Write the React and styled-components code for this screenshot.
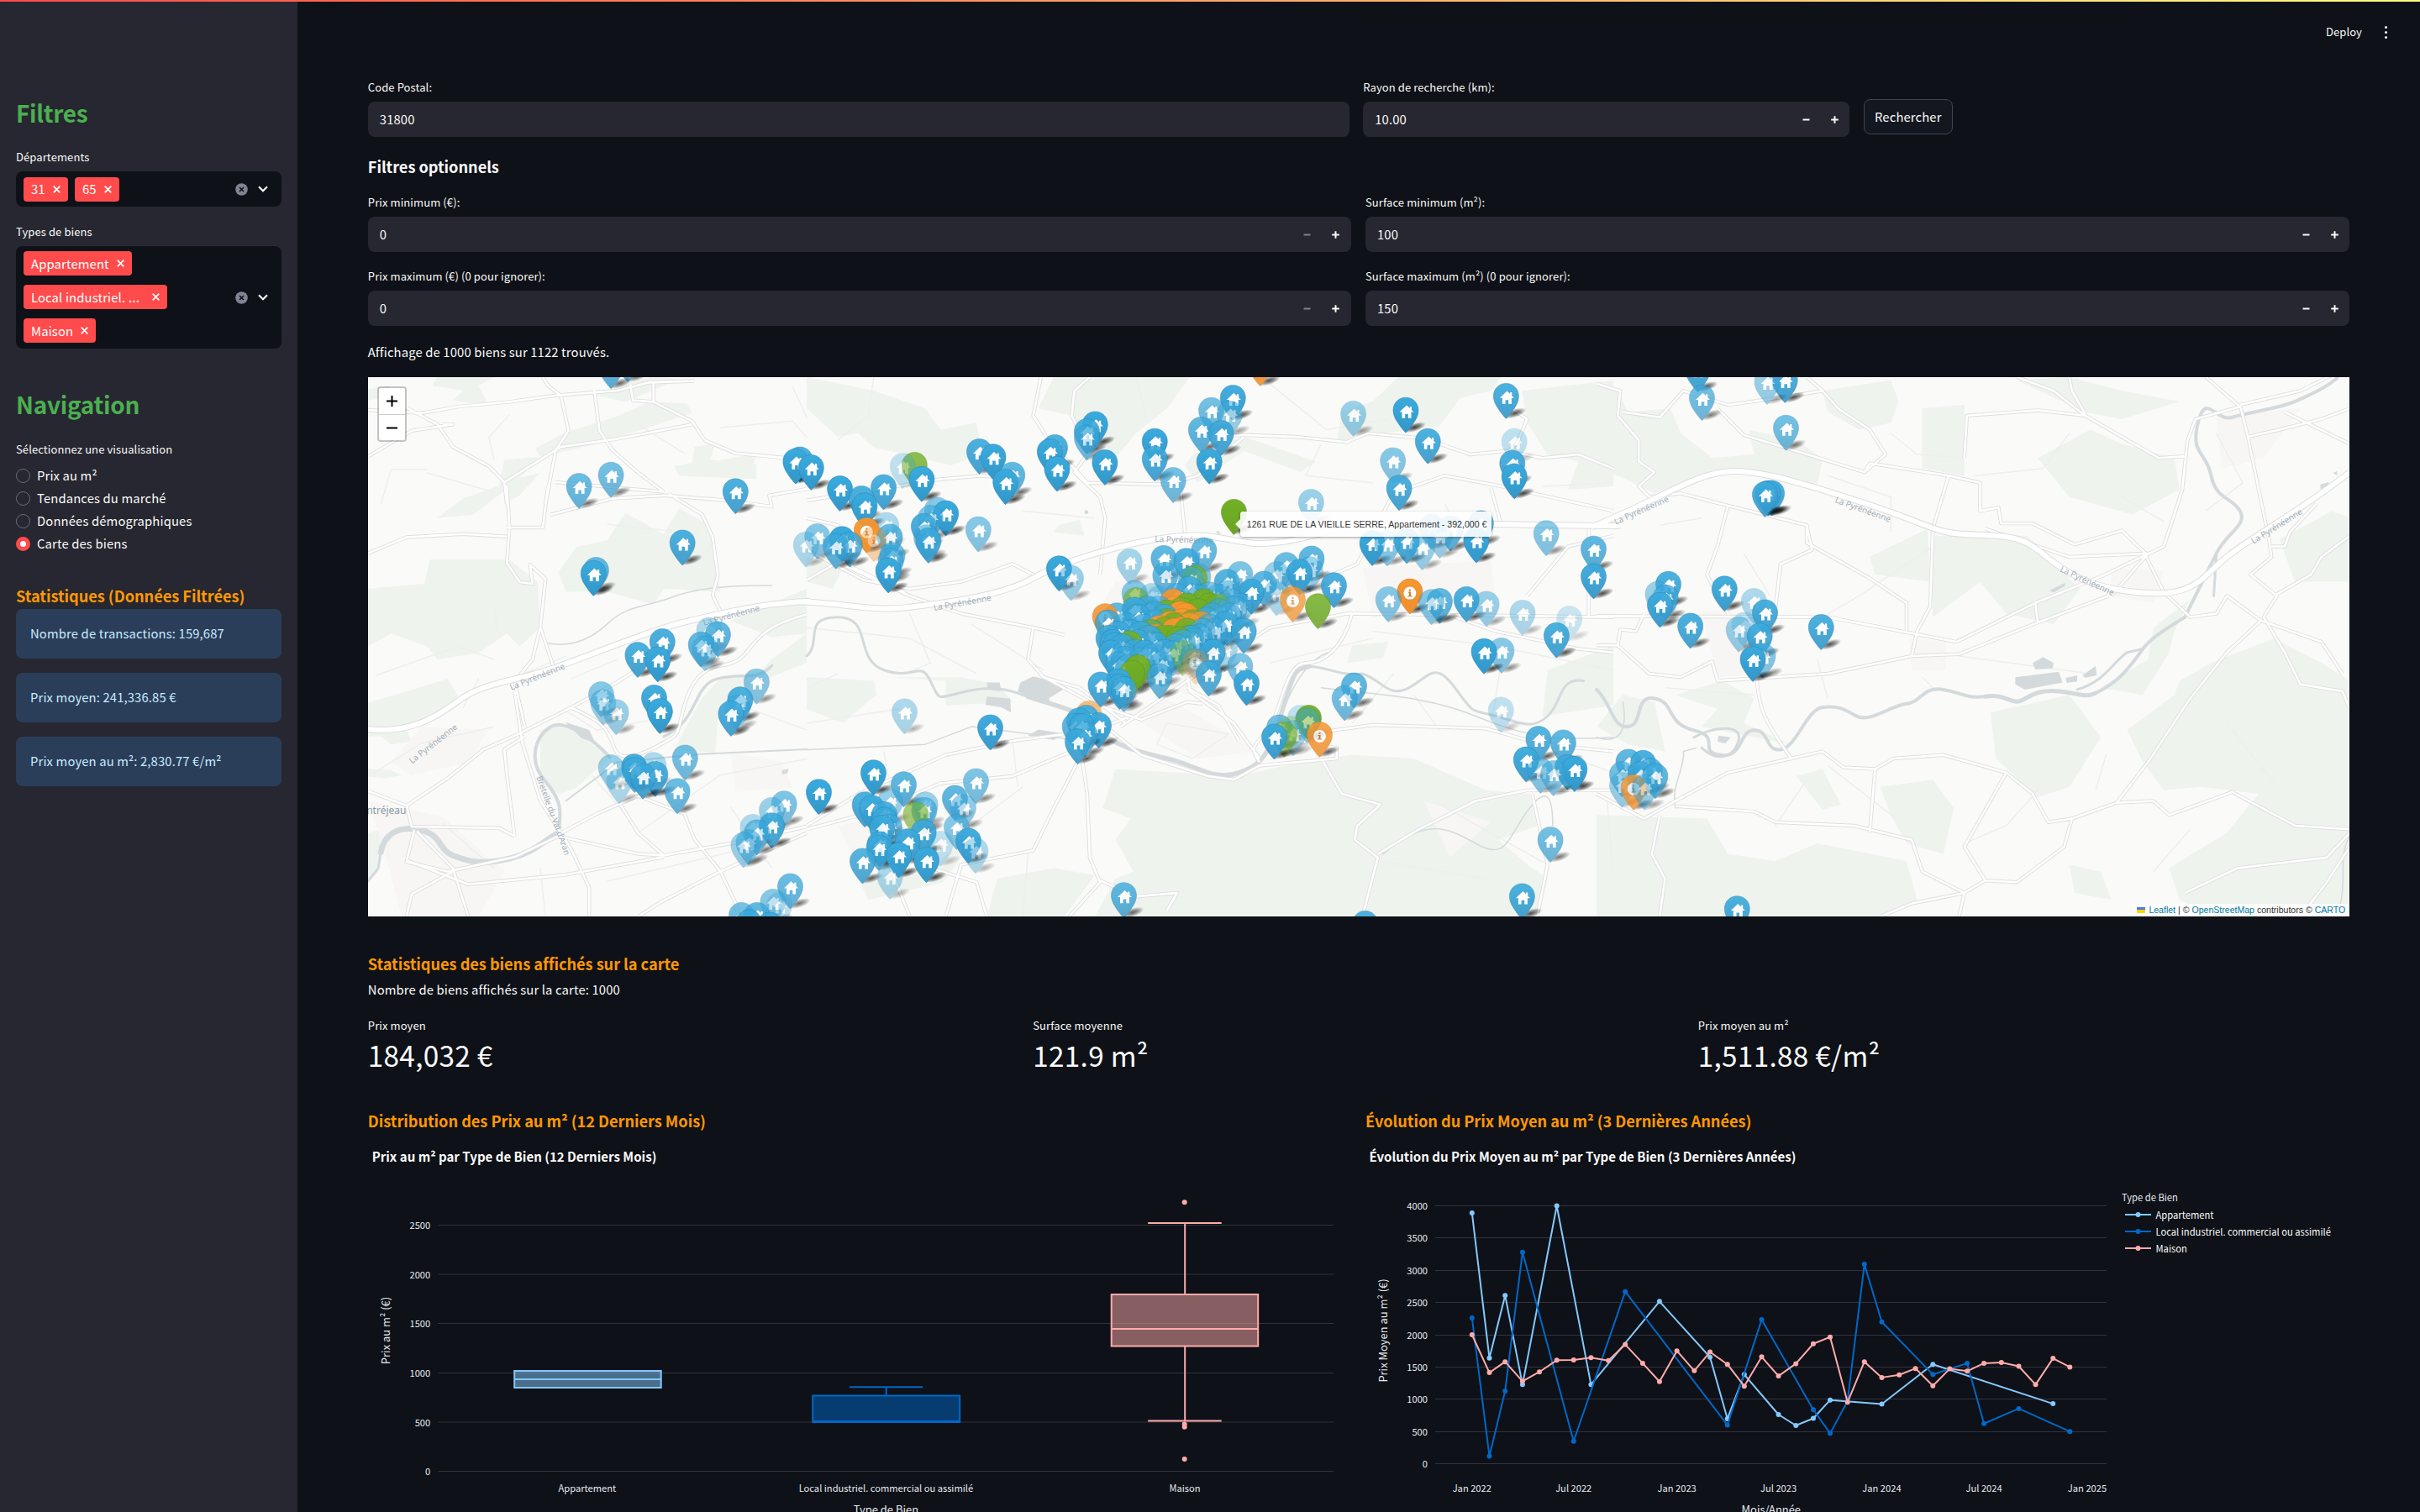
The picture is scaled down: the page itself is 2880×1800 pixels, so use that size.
import React from 'react';
import styled, { createGlobalStyle, css } from 'styled-components';

const FONT = '"Noto Sans CJK SC", "Noto Sans", sans-serif';

const GlobalStyle = createGlobalStyle`
  *, *::before, *::after { box-sizing: border-box; }
  html, body { margin: 0; padding: 0; background: #0e1117; }
  body { width: 2880px; height: 1800px; overflow: hidden; font-family: ${FONT}; color: #fafafa; }
`;

const bodyText = css`
  font-size: 14.8px;
  letter-spacing: 0.14px;
`;

const smallText = css`
  font-size: 13px;
  letter-spacing: 0.1px;
`;

/* ---------- shell ---------- */

const Shell = styled.div`
  position: relative;
  display: flex;
  width: 2880px;
  height: 1800px;
  overflow: hidden;
`;

const TopStripe = styled.div`
  position: absolute;
  top: 0;
  left: 0;
  right: 0;
  height: 2px;
  background: linear-gradient(90deg, #ff4b4b, #fffd80);
`;

const Toolbar = styled.header`
  position: absolute;
  top: 26px;
  right: 34px;
  display: flex;
  align-items: center;
  gap: 22px;
  height: 24px;
`;

const Deploy = styled.span`
  ${smallText}
  line-height: 24px;
`;

const Dots = styled.span`
  display: grid;
  gap: 3px;
  padding: 0 5px;
  i { display: block; width: 3px; height: 3px; border-radius: 50%; background: #fafafa; }
`;

const Sidebar = styled.aside`
  flex: none;
  width: 354px;
  height: 100%;
  padding: 114.5px 19px 0;
  background: #262730;
`;

const Main = styled.main`
  flex: none;
  width: 2526px;
  padding: 94px 83.8px 0 83.8px;
`;

/* ---------- widgets ---------- */

const Heading = styled.h1`
  margin: ${(p) => p.$top || 0}px 0 0;
  font-size: 28px;
  line-height: 38px;
  font-weight: 700;
  letter-spacing: -0.3px;
  color: #4caf50;
`;

const Subheading = styled.h3`
  margin: ${(p) => p.$top || 0}px 0 0;
  font-size: 18.2px;
  line-height: 24px;
  font-weight: 700;
  letter-spacing: -0.04px;
  white-space: nowrap;
  color: ${(p) => p.$color || '#ff9800'};
`;

const Label = styled.div`
  height: 27px;
  margin-top: ${(p) => p.$top || 0}px;
  ${smallText}
  line-height: 20px;
  white-space: nowrap;
`;

const Paragraph = styled.p`
  margin: ${(p) => p.$top || 0}px 0 0;
  ${bodyText}
  line-height: 24px;
`;

const SelectBox = styled.div`
  display: flex;
  align-items: center;
  width: 316px;
  height: ${(p) => p.$height}px;
  padding: 0 14px 0 9px;
  border-radius: 8px;
  background: #0e1117;
`;

const Tags = styled.div`
  flex: 1;
  display: flex;
  flex-direction: ${(p) => (p.$stack ? 'column' : 'row')};
  align-items: flex-start;
  gap: ${(p) => (p.$stack ? 11 : 8)}px;
  padding-bottom: ${(p) => (p.$stack ? 1 : 0)}px;
`;

const Tag = styled.span`
  display: flex;
  align-items: center;
  justify-content: space-between;
  width: ${(p) => p.$width}px;
  height: 29px;
  padding: 0 9px;
  border-radius: 4px;
  background: #ff4b4b;
  ${bodyText}
  line-height: 28px;
  white-space: nowrap;
  color: #fff;
`;

const Ellipsis = styled.span`
  font-family: "Noto Sans", sans-serif;
  font-size: 17px;
  line-height: 1;
`;

const SelectIcons = styled.div`
  display: flex;
  align-items: center;
  gap: 10px;
`;

const RadioList = styled.div`
  display: flex;
  flex-direction: column;
  margin-top: 1.5px;
`;

const RadioRow = styled.div`
  display: flex;
  align-items: center;
  gap: 8px;
  height: 26.9px;
  ${bodyText}
  line-height: 26px;
`;

const RadioDot = styled.span`
  width: 17px;
  height: 17px;
  border-radius: 50%;
  border: 1px solid #6b6c75;
  ${(p) => p.$on && css`border: 5.5px solid #ff4b4b; background: #fff;`}
`;

const InfoList = styled.div`
  display: flex;
  flex-direction: column;
  gap: 17.2px;
  margin-top: 4px;
`;

const InfoBox = styled.div`
  height: 59px;
  padding: 17px 17px;
  border-radius: 8px;
  background: #2b3e59;
  color: #c7ebff;
  ${bodyText}
  line-height: 24px;
`;

const FieldRow = styled.div`
  display: grid;
  grid-template-columns: ${(p) => p.$columns};
  justify-content: space-between;
  margin-top: ${(p) => p.$top || 0}px;
`;

const InputBox = styled.div`
  display: flex;
  align-items: center;
  height: 42px;
  padding: 0 1px 0 14px;
  border-radius: 8px;
  background: #262730;
  ${bodyText}
  line-height: 40px;
`;

const InputValue = styled.span`
  flex: 1;
`;

const Step = styled.span`
  display: grid;
  place-items: center;
  width: 34px;
  height: 42px;
  color: ${(p) => (p.$muted ? '#80828e' : '#fafafa')};
`;

const SearchButton = styled.button`
  justify-self: start;
  width: 106px;
  height: 42px;
  margin: 24px 0 0 0.6px;
  padding: 0;
  border: 1px solid #41444c;
  border-radius: 8px;
  background: #131720;
  color: #fafafa;
  font-family: ${FONT};
  ${bodyText}
  line-height: 36px;
`;

/* ---------- map chrome ---------- */

const MapFrame = styled.div`
  position: relative;
  width: 2358.4px;
  height: 642px;
  margin-top: 18px;
  overflow: hidden;
  background: #fafaf8;
  font-family: "Liberation Sans", Arial, sans-serif;
  & > svg { display: block; }
`;

const ZoomControl = styled.div`
  position: absolute;
  top: 11px;
  left: 11px;
  width: 35px;
  border: 2px solid rgba(0, 0, 0, 0.22);
  border-radius: 4px;
  background: #fff;
  background-clip: padding-box;
  overflow: hidden;
`;

const ZoomButton = styled.div`
  display: grid;
  place-items: center;
  height: 31px;
  color: #000;
  & + & { border-top: 1px solid #ccc; }
`;

const Tooltip = styled.div`
  position: absolute;
  left: 1038px;
  top: 160px;
  width: 299px;
  height: 30px;
  padding: 0 7px 0 8px;
  border-radius: 3px;
  background: #fff;
  box-shadow: 0 1px 3px rgba(0, 0, 0, 0.4);
  color: #222;
  font-size: 10.6px;
  line-height: 30px;
  white-space: nowrap;
  opacity: 0.9;
  &::before {
    content: "";
    position: absolute;
    left: -6px;
    top: 9px;
    border: 6px solid transparent;
    border-left: 0;
    border-right-color: #fff;
  }
`;

const Attribution = styled.div`
  position: absolute;
  right: 0;
  bottom: 0;
  display: flex;
  align-items: center;
  gap: 3px;
  height: 15px;
  padding: 0 5px;
  background: rgba(255, 255, 255, 0.8);
  color: #333;
  font-size: 10.55px;
  line-height: 15px;
  white-space: nowrap;
  b { font-weight: 400; color: #0078a8; }
`;

const Flag = styled.i`
  width: 10px;
  height: 7px;
  margin-right: 1px;
  background: linear-gradient(#4c7be1 50%, #ffd500 50%);
`;

/* ---------- metrics and charts ---------- */

const MetricRow = styled.div`
  display: grid;
  grid-template-columns: repeat(3, 1fr);
  column-gap: 16px;
  margin-top: 21px;
`;

const MetricLabel = styled.div`
  ${smallText}
  height: 17.5px;
  line-height: 20px;
`;

const MetricValue = styled.div`
  font-size: 33.3px;
  letter-spacing: 0.3px;
  line-height: 54px;
`;

const ChartRow = styled.div`
  display: grid;
  grid-template-columns: 1fr 1fr;
  column-gap: 16px;
  margin-top: 39.5px;
`;

const ChartSvg = styled.svg`
  display: block;
  width: 100%;
  height: 450px;
  margin-top: 14px;
  font-family: ${FONT};
`;

/* ---------- map data ---------- */

/* Tile frames: origin x, origin y, scale x, scale y */
const TILES = {
  N: [0, 0, 0.6122, 0.3827],
  W: [0, 540, 0.6122, 0.3827],
  C: [960, 440, 0.6122, 0.4209],
  E: [1900, 440, 0.625, 0.4209],
  T: [1280, 580, 1 / 3, 1 / 3],
  S: [860, 820, 1 / 3, 1 / 3],
  P: [0, 0, 1, 1],
};

/* x, y, opacity, with g or o in front for the green and orange pins */
const PINS = {
  P: '728,438,.8 748,430,.8 773,424,.3',
  C: `830,85,.95 788,120,.7 824,130,.5 768,175,.8 807,185,.9 784,265,1 678,208,1 678,257,.9 714,318,.7 581,268,1
    562,160,1 546,180,.9 546,198,.7 484,225,.9 474,237,1 488,286,1 401,303,.8 388,323,1 337,237,.9 364,252,1
    225,315,1 g211,275,.8 188,278,.3 151,338,.9 66,342,1 10,282,1 -12,260,.9 108,370,.9 114,390,1 o118,460,.95 o132,485,.4
    156,445,.4 163,478,.8 255,402,.6 272,412,1 242,425,.6 229,448,.9 234,480,.6 238,489,.9 335,457,.6 168,530,.7
    165,545,.7 160,573,1 70,485,1 85,500,.8 58,505,.8 22,477,.6 0,500,.4 o883,-12,.9 1064,130,.5 1166,120,1
    1361,80,.9 1209,208,.9 1141,262,.6 1377,208,.3 1373,270,.9 1377,307,1 1153,340,.9 982,380,.5 1439,468,.6
    1531,512,.8 1531,590,.95 1101,496,1 1130,497,.6 1168,490,.9 1198,508,.5 1232,475,.5 1253,455,.8 1303,488,1
    1312,440,.8 1216,450,.7 492,568,1 515,595,.5 1132,655,.6 o1174,633,1 1216,663,.6 1232,660,.8 1284,655,.9
    1323,668,.5 1393,693,.4 1484,710,.25 1459,757,.9 1318,802,1 1352,800,.6 1351,968,.3 618,1492,.8 1392,1495,.9
    1087,1572,.9 1447,1335,.7 1424,1050,.85 1472,1060,.8 1400,1108,.95 1428,1140,.6 1453,1147,.6 1480,1130,.9 1494,1135,1`,
  E: `202,85,.7 194,5,.9 326,40,.5 360,35,.9 362,170,.7 335,355,.9 328,355,.9 322,358,.9 245,625,.95 138,612,.9
    118,640,.5 133,650,.8 122,671,.95 180,730,.9 301,660,.4 322,692,.9 283,728,.3 272,740,.5 312,758,.9 318,815,.6
    299,824,1 429,734,.9 62,1115,.8 90,1118,.9 50,1150,.7 103,1140,.8 113,1155,.8 85,1150,.8 50,1180,.5 o72,1187,.8 93,1187,.5
    269,1530,.9`,
  W: `1189,72,.7 1127,107,.75 1431,123,.9 1548,30,1 1328,283,.9 1160,368,.8 1155,378,1 1289,590,.9 1241,632,.9
    1280,646,1 1380,555,.4 1397,568,.8 1364,600,.8 1372,612,.5 1472,715,.6 1170,755,.6
    1174,780,.5 1199,810,.5 1273,765,.95 1284,807,1 1189,982,.5 1205,1025,.4 1234,980,.95 1235,990,.8 1272,975,.4
    1275,1003,.9 1251,1010,.9 1333,952,.7 1318,1056,.75`,
  S: `65,45,.9 32,95,.9 55,75,.5 652,88,.4 958,145,.97 541,306,1 649,348,.8 346,375,1 222,417,.65 178,440,.5
    110,500,.4 125,520,.7 178,495,.9 95,555,.6 77,565,.5 907,337,.65 832,397,.8 862,430,.55 726,420,.5 722,440,.7
    g692,455,.6 510,420,.9 535,432,.95 600,410,.5 580,455,.9 580,475,.9 572,503,.9 598,500,.7 720,519,.9 663,552,.95
    563,562,.9 560,575,.8 502,622,.85 631,601,1 730,618,.98 838,500,.6 780,560,.3 880,550,.95 905,585,.4 600,677,.4
    244,712,.75 182,767,.6 205,780,.3 70,815,.7 95,840,.95 125,815,.8 170,850,.9`,
  T: `g568,95,1 195,272,.45 317,260,.8 398,270,.9 461,232,.75 323,320,.75 g427,330,.8 415,335,.6 440,325,.6 408,370,.9
    590,317,.65 543,345,.85 675,352,.8 630,380,.95 720,385,.4 720,318,.5 755,285,.75 845,262,.8 840,300,.5 802,310,.95
    925,357,.9 o778,407,.75 g868,432,.85 213,385,.6 g218,410,.6 275,395,.4 300,405,.4 o350,415,.9 213,445,.9
    o108,468,.9 118,490,.8 150,465,.8 180,500,.7 245,505,.8 o355,440,.95 g330,455,.9 g400,430,.95 g460,415,.95
    g480,430,.95 g512,432,.6 o375,460,1 320,470,.9 g330,485,.8 o385,485,1 g420,490,.8 o370,500,1 o300,510,.9
    o355,520,.9 g400,520,.9 o450,495,.75 470,480,.6 510,400,.5 545,385,.6 560,415,.6 570,440,.6 515,450,.6
    445,400,.7 480,390,.6 365,395,.7 590,430,.5 260,440,.8 285,460,.7 500,520,.6 225,470,.8 200,525,.8 155,530,.8
    538,495,.95 603,520,.85 120,545,.9 135,560,.8 130,598,.95 145,570,.9 175,605,.6 178,620,.7 g195,565,.9
    225,560,.8 250,598,.9 290,570,.8 320,595,.8 350,600,.6 360,575,.7 g385,600,.4 g340,545,.95 g315,545,.9
    170,575,.8 215,595,.8 265,545,.9 235,530,.8 275,525,.8 385,560,.7 445,540,.8 480,505,.7 455,520,.6 490,465,.7
    550,465,.7 530,430,.6 o395,465,.9 o410,500,.8 g355,500,.9 g440,450,.9 g380,445,.8 o340,495,.9 g320,515,.8
    o380,515,.9 g270,525,.7 g405,545,.7 280,610,.6 235,625,.7 190,650,.8 155,640,.8 285,490,.8 300,440,.7
    o290,540,.7 g370,550,.9 415,545,.8 425,555,.6 425,610,.4 o430,630,.3 492,595,.9 535,585,.4 590,645,.65
    613,706,.97 478,673,.85 310,640,.6 302,682,.75 g225,650,.95 g205,670,.8 92,712,.9 155,700,.95 160,720,.9
    175,728,.7 o50,815,.6 15,840,.9 40,830,.9 85,857,.95 35,890,.8 10,915,.9 0,860,.8 25,860,.8 997,715,.8 963,760,.7 805,830,.3
    730,865,.7 g770,870,.3 g835,830,.95 830,840,.5 712,898,.95 780,885,.4 g748,890,.6 o874,890,.85`,
};

const pins = Object.entries(PINS)
  .flatMap(([tile, list]) => {
    const [ox, oy, sx, sy] = TILES[tile];
    return list.trim().split(/\s+/).map((item) => {
      const kind = /^[go]/.test(item) ? item[0] : 'b';
      const [x, y, a] = item.replace(/^[go]/, '').split(',').map(Number);
      return { kind, a, x: ox + x * sx - 1, y: oy + y * sy - 0.3 };
    });
  })
  .sort((p, q) => p.y - q.y);

const WOODS = {
  N: [
    'M850,1173L960,1173 930,1200 950,1262 880,1245 900,1215 840,1200Z',
    'M1100,1345L1200,1295 1262,1250 1335,1255 1345,1285 1240,1340 1150,1385 1050,1420 1040,1395Z',
    'M1160,1230L1210,1190 1270,1173 1320,1180 1215,1250Z',
    'M715,1210L760,1200 740,1240 715,1245Z',
    'M1350,1390L1390,1380 1380,1430 1470,1445 1470,1490 1320,1480 1310,1450 1345,1440Z',
    'M980,1500L1050,1470 1010,1540 980,1568Z',
  ],
  W: [
    'M715,420L825,405 835,330 990,330 1045,400 1050,540 1010,600 985,560 930,620 850,640 830,600 760,560 715,600Z',
    'M1120,290L1180,270 1215,185 1290,250 1320,170 1380,225 1400,430 1290,420 1270,470 1180,430 1100,430 1085,370Z',
    'M850,200L900,140 970,100 980,20 1050,10 1000,90 920,190Z',
    'M1050,860L1095,840 1130,880 1185,945 1120,1040 1085,1060 1050,1000Z',
    'M715,775L780,745 870,700 890,755 830,840 790,860 800,895 760,905 740,880 715,880Z',
    'M1365,760L1400,700 1470,690 1500,640 1568,560 1568,650 1430,740 1395,830 1390,930 1310,920Z',
    'M715,980L760,985 780,1000 750,1010 715,1005Z',
    'M1420,520L1568,420 1568,560 1500,570Z',
    'M1400,20L1470,0 1460,60Z',
    'M715,1180L740,1170 735,1300 715,1330Z',
  ],
  C: [
    'M0,21L130,60 230,110 260,170 330,150 340,240 280,270 130,220 100,180 60,190 0,110Z',
    'M480,21L745,21 700,110 640,180 600,250 545,185 515,130 450,110Z',
    'M1150,21L1350,21 1330,60 1270,80 1230,160 1100,185 1030,205 1040,120 1100,90Z',
    'M1390,60L1568,30 1568,330 1480,340 1500,260 1440,240 1400,150Z',
    'M750,240L850,190 990,260 960,290 850,230 760,320 735,270Z',
    'M0,870L130,880 135,920 70,1000 0,960Z',
    'M160,870L270,880 270,950 400,940 370,890 300,870Z',
    'M840,1150L960,1110 1060,1090 1180,1100 1320,1190 1405,1200 1420,1290 1345,1330 1400,1400 1440,1440 1420,1547 560,1547 600,1440 635,1420 600,1330 630,1270 575,1240 600,1130Z',
    'M1440,850L1568,780 1568,950 1430,980Z',
    'M350,1547L370,1440 480,1410 560,1430 500,1547Z',
    'M0,530L70,560 50,620 0,600Z',
    'M490,440L530,425 540,470 480,460Z',
    'M1060,780L1130,770 1120,815 1050,830Z',
    'M265,1450L300,1380 290,1350 250,1400 100,1440 120,1500Z',
  ],
  E: [
    'M0,70L40,60 60,120 140,110 160,180 220,250 300,240 290,170 380,200 430,250 420,330 330,300 240,280 110,350 40,300 0,290Z',
    'M430,60L560,30 575,90 560,150 500,170 440,120Z',
    'M620,110L700,100 700,300 620,280Z',
    'M640,470L820,470 880,560 920,620 870,720 780,690 730,600 640,700Z',
    'M520,530L630,450 635,600 530,580Z',
    'M840,250L940,170 1000,210 1100,250 1110,340 1020,410 900,360Z',
    'M800,30L900,21 1000,60 1110,90 1000,140 930,120Z',
    'M1110,880L1170,830 1290,760 1380,830 1434,880 1434,1547 1180,1547 1110,1500 1090,1410 1200,1310 1260,1200 1150,1180 1080,1190 1040,1110 1010,1020 1100,920Z',
    'M750,970L900,920 960,1040 900,1180 840,1210 760,1100Z',
    'M150,920L230,960 200,1010 370,1060 280,1000 300,930 240,880Z',
    'M540,1180L640,1160 680,1240 660,1370 590,1340 560,1260Z',
    'M0,1260L210,1270 250,1370 340,1390 420,1340 590,1390 610,1500 540,1547 0,1547Z',
    'M900,1400L960,1420 980,1500 910,1480Z',
    'M1300,480L1400,400 1434,420 1434,600 1330,600Z',
    'M1130,650L1060,730 1050,820 960,900 1040,920 1090,800 1100,740Z',
    'M380,1150L430,1130 465,1230 430,1245Z',
    'M50,920L110,940 130,1080 60,1060 0,1010Z',
  ],
};

const URBAN = {
  W: ['M820,850L950,860 910,960 800,1000 760,960Z', 'M715,1080L860,1130 980,1300 930,1440 780,1440 750,1250Z', 'M1420,930L1520,960 1540,1040 1430,1050Z'],
  C: [
    'M600,600L840,560 860,760 740,920 600,860 560,700Z', 'M1080,560L1330,540 1340,670 1100,700Z',
    'M620,970L760,1100 880,1080 700,930Z', 'M60,1290L220,1240 260,1400 100,1400Z', 'M1200,1220L1330,1280 1250,1380Z',
  ],
  E: ['M595,760L665,770 665,850 600,850Z', 'M980,560L1080,570 1060,660 980,640Z', 'M1180,130L1340,110 1270,250 1190,280Z', 'M200,680L320,690 320,860 230,870Z'],
};

const RIVERS = {
  W: [
    [7, 'M740,1240C745,1190 770,1155 815,1170S850,1230 880,1250S940,1280 990,1260S1060,1200 1085,1180'],
    [4, 'M1085,1180C1090,1120 1095,1085 1060,1020S1040,880 1070,850S1160,900 1185,945'],
    [3.5, 'M1290,880C1360,830 1345,720 1395,700S1470,710 1500,660 1568,630'],
    [3, 'M715,1330L735,1290 740,1240'],
    [2, 'M1100,1080L1200,960 1360,935 1568,920'],
    [1.5, 'M1065,590C1100,600 1140,590 1180,530S1250,480 1300,450S1400,410 1500,410 1568,440'],
  ],
  C: [
    [3, 'M0,810C30,770 -10,700 60,700S90,820 150,850S220,820 240,880S250,930 310,910S400,910 430,925'],
    [5.5, 'M430,925C480,950 530,960 560,1010S640,1080 700,1100S790,1165 840,1140S900,1080 925,960S950,850 975,840'],
    [3, 'M975,840C1000,835 1040,870 1080,860C1120,880 1130,930 1170,900S1220,820 1260,900S1290,960 1340,980S1410,1020 1440,980S1460,870 1510,880 1568,930'],
    [1.5, 'M0,1075L230,1060 320,1010 430,1030 560,1055'],
    [1.5, 'M930,950C960,840 1000,800 1020,800M1000,900C1100,920 1200,920 1300,980S1450,1050 1568,1040'],
    [1.5, 'M1120,1370C1200,1270 1240,1290 1300,1340S1360,1330 1400,1250S1450,1210 1450,1290'],
  ],
  E: [
    [4, 'M0,905C30,950 30,1015 60,1010S70,920 110,930S130,1000 185,1020S190,1080 235,1090S270,1020 300,1020S320,1080 350,1075S400,960 430,955S470,960 495,980S560,950 590,945S620,895 660,905S700,930 740,925'],
    [5, 'M740,925C780,915 790,950 810,935S840,905 880,910S930,930 950,915'],
    [4, 'M950,915C1000,880 1020,830 1040,790S1100,720 1120,700'],
    [4, 'M1120,700C1140,640 1160,580 1180,520S1240,440 1225,400S1180,370 1170,300S1130,240 1145,150S1180,150 1210,135S1300,110 1330,90S1390,50 1410,24'],
    [3, 'M915,905C970,880 980,830 1010,800L1040,790M185,1040C220,1010 280,1000 270,1050S230,1110 200,1070'],
    [1.5, 'M0,1040C40,1060 60,1030 50,940M150,1240C140,1180 170,1120 165,1080L190,1070'],
    [3, 'M1175,640L1180,520'],
    [1.5, 'M1434,1320C1410,1380 1430,1430 1415,1520'],
  ],
};

const LAKES = {
  W: ['M1098,835L1145,860 1157,900 1130,885Z', 'M1520,985L1533,980 1530,995 1520,998Z'],
  C: [
    'M415,885L440,868 475,880 498,905 470,930 480,955 410,910Z', 'M350,885L375,885 378,910 352,905Z',
    'M350,925L395,930 397,970 378,955 347,948Z', 'M430,1035L450,1018 500,1030 480,1048Z', 'M350,985L370,980 380,1010 350,1010Z',
    'M795,463L800,455 805,465Z', 'M540,398L547,398 547,408 540,408Z',
  ],
  E: [
    'M830,830L850,813 870,830 868,845 835,848Z', 'M797,870L880,855 887,885 815,905 797,890Z',
    'M893,872L915,865 915,882 895,886Z', 'M925,865L950,838 952,865 930,872Z', 'M232,1035L255,1040 245,1058 230,1052Z',
    'M862,625L892,603 892,612 870,630Z', 'M1378,325L1395,317 1390,330 1378,338ZM1402,292L1410,287 1410,300Z',
  ],
};

const MOTORWAYS = {
  W: ['M715,857C790,870 840,830 890,770S1000,710 1080,665S1270,545 1340,520S1490,462 1575,460'],
  C: ['M-5,657C80,662 130,685 200,672S380,640 440,590S620,490 700,475S800,478 860,490S1000,460 1060,443S1250,438 1575,442L1580,440'],
  E: ['M-10,445C70,400 150,330 200,305S280,285 330,300S520,380 590,420S660,465 740,468S830,500 870,545S960,625 1050,632S1150,590 1200,530S1340,400 1434,290'],
};

const ROADS = {
  N: [
    'M715,1275L820,1285 890,1265 990,1250 1080,1230 1200,1215 1260,1190 1350,1185',
    'M790,1268L850,1320 880,1390 950,1450 980,1500 985,1568',
    'M1090,1230L1105,1340 1080,1400 1060,1568',
    'M1155,1215L1165,1340 1190,1400 1240,1470 1290,1530',
    'M980,1500L1090,1390 1200,1365 1345,1320',
    'M1225,1195L1230,1245 1270,1250 1270,1190M1270,1250L1345,1310 1370,1370 1430,1410 1530,1425',
    'M860,1320L880,1320 800,1340 715,1420M1055,1173L1065,1200 1090,1230M1080,1500L1290,1530',
  ],
  W: [
    'M985,100L990,230 985,340 1010,400 1035,405 1030,345 1060,390 1050,540 1075,660',
    'M715,310L790,260 900,250 985,258', 'M1070,190L1190,140 1290,130 1410,145 1500,165 1495,130 1568,110',
    'M1300,125L1365,190 1385,260 1395,380 1385,440 1400,490', 'M985,230L1055,230 1065,100',
    'M1050,540L1035,640 1000,710 1020,850', 'M1000,740L1015,900 1050,1080 1110,1230 1145,1350 1145,1440',
    'M790,1095L870,1010 940,920 1010,870 1110,790 1190,720 1240,670',
    'M1020,880L980,920 985,1000 1000,1190', 'M1110,790C1180,840 1180,860 1195,920S1290,900 1310,880S1320,680 1400,660S1430,560 1568,500',
    'M1085,1185L1160,1120 1240,1065 1330,1120 1350,1200 1400,1300 1430,1400 1435,1440',
    'M1205,1090L1240,1180 1290,1250M1085,1190L1240,1245 1290,1250 1430,1210 1568,1160',
    'M810,1175L880,1290 910,1440M805,1170L790,1270 870,1300 1000,1255 1085,1190',
    'M715,1050L790,1095 800,1160 970,1165 1000,1190', 'M1240,1440L1290,1390 1400,1300 1568,1180',
    'M790,1265L910,1340 1100,1310 1290,1255M880,1300L800,1370 790,1440',
  ],
  C: [
    'M455,21L440,130 470,200 545,320 700,325 760,300 850,190',
    'M550,21L520,60 515,130 550,230 520,290 570,360 580,420 570,580',
    'M0,370L130,340 260,310 340,300 400,310', 'M850,185L950,190 1050,205 1090,180 1200,195 1290,240 1360,230 1430,250 1500,240 1568,280',
    'M780,190L850,185M1370,110L1400,140 1380,210 1360,235', 'M725,320L735,460', 'M0,510L110,595 200,620 300,600 400,550 440,580',
    'M0,595L60,545 200,640 300,690 440,730 500,750', 'M0,420L60,440 90,560 190,630', 'M440,730L430,820 460,870 530,900 620,1000',
    'M455,865L550,940 650,990 740,940 770,945', 'M740,870L745,910 830,1000 880,1100',
    'M610,1010L740,880 900,730 1050,690 1568,700', 'M1060,690C1040,800 1000,830 970,830S930,900 910,980 850,1050 880,1110',
    'M620,985L560,1020 400,1050 270,1090 100,1200 0,1290', 'M590,1020L650,1090 780,1150 830,1160 880,1120 1030,1100 1030,1070 900,1035',
    'M900,1040L1000,1025 1100,1005 1320,1015 1430,1060 1568,1080', 'M530,1100L480,1240 440,1360 300,1400 270,1547',
    'M535,1100L545,1200 550,1380 570,1450 510,1547', 'M570,1445L640,1490 720,1480 700,1530', 'M1000,1100L1040,1200 1115,1230 1070,1290 1065,1330 1110,1380 1080,1547',
    'M1110,1370L1190,1300 1300,1220 1400,1190 1568,1190', 'M0,1300L130,1250 260,1170 400,1150 530,1070',
    'M220,1400L330,1450 350,1547', 'M940,630L1070,550 1140,350 1240,300 1350,330 1568,400', 'M860,650L940,620',
    'M1330,335L1350,440M1400,640L1480,500 1568,470M1520,440L1520,700', 'M1260,700L1340,740 1500,790 1568,800',
    'M1410,1200L1440,1400 1420,1547', 'M160,1400L200,1547M840,1050L800,950 740,900',
  ],
  E: [
    'M0,40L45,60 40,130 80,200 80,260 110,290 80,330 100,360 160,350 250,385 400,440 400,490 520,590 590,660 590,740',
    'M50,120L120,135 165,60 250,100 370,75 430,60 400,21', 'M230,110L280,185 510,290 520,265 670,300 730,320 730,400 765,390 770,435 830,435 910,495 1000,455 1045,520',
    'M430,60L460,110 520,170 550,240 510,290', 'M700,250L705,130 840,115 930,130 1000,190 1070,250 1120,245',
    'M800,21L870,60 930,130M900,21L905,60 930,125', 'M670,300L640,450 635,670 610,740 600,810',
    'M1225,105L1140,140 1125,200 1115,340 1080,500 1045,525 960,585 835,660 685,770 440,700 0,697',
    'M1225,100L1340,60 1434,-10', 'M1225,100L1240,190 1280,480 1285,530 1245,580 1295,640 1270,700 1310,800 1340,890 1420,910 1434,960',
    'M1240,190L1300,170 1380,140 1434,110M1225,105L1160,21', 'M1310,120L1434,210', 'M1285,500L1310,500 1320,460 1370,380',
    'M600,810L690,805 840,715 975,640M600,810L440,860 230,880 220,825 160,870 100,860 40,780 0,780',
    'M40,780L45,735 75,740 90,690', 'M250,385L230,500 210,580 250,690M400,440L410,510 350,550 340,680',
    'M305,880C310,980 330,1010 370,1100L430,1080 470,1125 530,1130 565,1100 660,1090 780,1140 830,1200 860,1280 905,1270',
    'M370,1100L250,1140 150,1220 90,1270 0,1200', 'M150,1235L300,1250 340,1280 490,1290 600,1330 620,1420 700,1480 740,1445 700,1350 780,1140',
    'M740,1445L800,1450 890,1350 905,1270 990,1225 1060,1220 1090,1260 1210,1195 1330,1290 1434,1300',
    'M990,1225L1050,1110 1130,930 1200,800 1265,710', 'M1045,525L1080,630 1130,700 1180,690 1200,640 1265,710 1380,770 1420,860',
    'M530,1130L520,1310M120,1260L105,1370 130,1440 120,1547', 'M540,1547L600,1510 700,1480 690,1547',
    'M1434,1310L1390,1380 1220,1410 1120,1480M1434,470L1380,530 1360,580 1295,635', 'M740,450L900,530 1050,520',
    'M1340,1547L1390,1450 1434,1350M835,660L840,715M1050,520L980,640',
  ],
};

const LANES = {
  N: ['M990,1290L950,1360 960,1430M1400,1330L1540,1310 1568,1360M1240,1320L1330,1410M1540,1200L1568,1300M740,1568L760,1460 830,1460'],
  W: [
    'M730,690L890,600 960,640M960,480L970,570M1180,220L1360,250M830,60L960,120M1100,630L1010,690M1110,700L1200,640M930,700L900,790',
    'M720,1000L820,900 960,850M1240,1180L1400,1000 1568,950M1150,1000L1220,1130M1420,1100L1500,1290M1180,1330L1420,1240M1050,1290L1060,1440M860,1150L960,1290M1400,760L1568,860M1100,800L1160,860 1260,830',
  ],
  C: [
    'M130,21L120,130 60,200M640,20L660,140M420,400L560,420M250,300L230,450M900,40L1010,170 1130,140M1000,210L970,300 1100,320M1240,380L1290,520M1430,330L1568,320',
    'M0,730L200,760 330,860M200,690L240,830 190,860M320,720L460,850M150,1080L170,1250M0,1000L180,960M400,1050L410,1180M420,1180L320,1290M1140,860L1060,1000M1100,740L1330,780 1568,850M900,830L1100,760',
    'M1180,920L1230,1020M1350,830L1330,1010M1450,1080L1568,1140M1230,1230L1440,1400M430,1370L420,1547M1110,1390L1320,1440M0,900L60,860M700,1000L820,1030 750,1100 680,1060Z',
  ],
  E: [
    'M560,180L610,240 700,250M440,300L560,360 560,460M640,500L500,640 430,700M120,440L200,420M280,520L330,640M900,180L850,280 720,300M1000,360L1080,430M1180,180L1230,320 1160,400',
    'M690,810L940,860M130,900L300,920M420,820L440,930M620,870L640,900M400,1160L340,1290M440,1120L570,1270M840,1190L780,1290 700,1340M970,1090L950,1190M1130,1300L1060,1420M1200,1000L1290,1170M20,1220L30,1420',
  ],
};

const STREET_LABELS = [
  ['La Pyrénéenne', 515, 885, -38], ['La Pyrénéenne', 639, 805, -22], ['La Pyrénéenne', 870, 732, -15],
  ['La Pyrénéenne', 1145, 717, -10], ['La Pyrénéenne', 1409, 642, 2], ['La Pyrénéenne', 1953, 607, -24],
  ['La Pyrénéenne', 2217, 606, 20], ['La Pyrénéenne', 2484, 691, 25], ['La Pyrénéenne', 2709, 626, -32],
];

const frame = (tile) => {
  const [ox, oy, sx, sy] = TILES[tile];
  return `translate(${ox} ${oy}) scale(${sx} ${sy})`;
};

const TileLayer = ({ data, ...rest }) =>
  Object.entries(data).map(([tile, paths]) => (
    <g key={tile} transform={frame(tile)} {...rest}>
      {paths.map((d, i) => <path key={i} d={d} vectorEffect="non-scaling-stroke" />)}
    </g>
  ));

const PIN_COLORS = {
  b: ['#3aabde', '#3396c8', '#2a81ad'],
  g: ['#72b026', '#6aa524', '#5a8d1e'],
  o: ['#f69730', '#ef8f2c', '#cf7a24'],
};

function BaseMap() {
  return (
    <svg width="2358.4" height="642" viewBox="437.8 449 2358.4 642" preserveAspectRatio="none">
      <defs>
        <radialGradient id="shade">
          <stop offset="0" stopColor="#000" stopOpacity="0.75" />
          <stop offset="0.55" stopColor="#000" stopOpacity="0.4" />
          <stop offset="1" stopColor="#000" stopOpacity="0" />
        </radialGradient>
        {Object.entries(PIN_COLORS).map(([kind, [top, bottom]]) => (
          <linearGradient key={kind} id={`fill-${kind}`} x1="0" y1="0" x2="0" y2="1">
            <stop offset="0" stopColor={top} />
            <stop offset="1" stopColor={bottom} />
          </linearGradient>
        ))}
        {Object.entries(PIN_COLORS).map(([kind, colors]) => (
          <g key={kind} id={`pin-${kind}`}>
            <ellipse cx="10.500" cy="18.500" rx="14" ry="5" transform="rotate(-18 10.500 18.500)" fill="url(#shade)" />
            <path
              d="M0,-17C8.800,-17 15,-10.300 15,-2C15,5 11.500,10 8.500,14.500C5.500,19 3,22 0,25C-3,22 -5.500,19 -8.500,14.500C-11.500,10 -15,5 -15,-2C-15,-10.300 -8.800,-17 0,-17Z"
              fill={`url(#fill-${kind})`}
              stroke={colors[2]}
              strokeOpacity="0.5"
            />
            {kind === 'b' && (
              <path d="M1,-7.800L4.700,-4.300V-6.300H6.900V-2.200L9.500,0.400H6.500V7.500H2.800V2.800H-0.800V7.500H-4.500V0.400H-7.500Z" fill="#fff" />
            )}
            {kind === 'o' && (
              <>
                <circle cx="0" cy="0" r="7.500" fill="#fff" />
                <path d="M-2,-1.500H1V3H2.500V4.200H-2.500V3H-1V-0.300H-2ZM-1,-4.500H1V-2.700H-1Z" fill={colors[2]} />
              </>
            )}
          </g>
        ))}
      </defs>
      <rect x="437" y="449" width="2360" height="642" fill="#fafaf8" />
      <TileLayer data={WOODS} fill="#eef3ee" />
      <TileLayer data={URBAN} fill="#f7f6f4" />
      <TileLayer data={LANES} fill="none" stroke="#eeeeee" strokeWidth="1.500" />
      {Object.entries(RIVERS).map(([tile, list]) => (
        <g key={tile} transform={frame(tile)} fill="none" stroke="#d4dadc" strokeLinecap="round" strokeLinejoin="round">
          {list.map(([w, d], i) => <path key={i} d={d} strokeWidth={w} vectorEffect="non-scaling-stroke" />)}
        </g>
      ))}
      <TileLayer data={LAKES} fill="#d4dadc" />
      <TileLayer data={ROADS} fill="none" stroke="#dfdfdf" strokeWidth="4.500" strokeLinejoin="round" />
      <TileLayer data={ROADS} fill="none" stroke="#ffffff" strokeWidth="2.600" strokeLinejoin="round" />
      <TileLayer data={MOTORWAYS} fill="none" stroke="#dddddd" strokeWidth="8" />
      <TileLayer data={MOTORWAYS} fill="none" stroke="#ffffff" strokeWidth="6" />
      <g fill="#a3afba" fontFamily='"Noto Sans", sans-serif' fontSize="10" textAnchor="middle">
        {STREET_LABELS.map(([text, x, y, r], i) => (
          <text key={i} x={x} y={y} dy="4" transform={`rotate(${r} ${x} ${y})`}>{text}</text>
        ))}
        <text x="655" y="972" dy="0" transform="rotate(70 655 972)">Bretelle du Val d’Aran</text>
      </g>
      <text x="436" y="969" fill="#8d99a6" fontFamily='"Noto Sans", sans-serif' fontSize="12">ntréjeau</text>
      {pins.map((p, i) => (
        <use key={i} href={`#pin-${p.kind}`} x={p.x.toFixed(1)} y={p.y.toFixed(1)} opacity={p.a} />
      ))}
    </svg>
  );
}

/* ---------- charts ---------- */

const BLUE = '#83c9ff';
const NAVY = '#0068c9';
const PINK = '#ffabab';
const INK = '#e6eaf1';

function BoxChart() {
  const grid = [[1458.5, 2500], [1517, 2000], [1575.5, 1500], [1634.5, 1000], [1693, 500], [1751.5, 0]];
  return (
    <ChartSvg viewBox="437.8 1360 1171.2 450">
      <text x="442.500" y="1383" fontSize="15.050" fontWeight="700" fill="#fafafa">Prix au m² par Type de Bien (12 Derniers Mois)</text>
      {grid.map(([y, label]) => (
        <g key={label}>
          <line x1="521" x2="1587" y1={y} y2={y} stroke="#31333f" strokeWidth="1" />
          <text x="512" y={y + 4.5} fontSize="11.150" textAnchor="end" fill={INK}>{label}</text>
        </g>
      ))}
      <g stroke={BLUE} strokeWidth="2" fill={BLUE} fillOpacity="0.5">
        <rect x="612" y="1632" width="174.500" height="20" />
        <path d="M612,1642H786.500" />
      </g>
      <g stroke={NAVY} strokeWidth="2" fill={NAVY} fillOpacity="0.5">
        <rect x="967" y="1661.500" width="175" height="31.500" />
        <path d="M967,1692H1142M1011,1651.300H1098M1054.500,1651.300V1661.500" />
      </g>
      <g stroke={PINK} strokeWidth="2" fill={PINK} fillOpacity="0.5">
        <rect x="1322.500" y="1541" width="174.500" height="61.500" />
        <path d="M1322.500,1582H1497M1366,1456H1453.500M1410,1456V1541M1410,1602.500V1691.500M1366,1691.500H1453.500" />
      </g>
      {[1431.3, 1695.5, 1698.7, 1737].map((y) => <circle key={y} cx="1409.500" cy={y} r="3" fill={PINK} />)}
      <g fontSize="11.150" textAnchor="middle" fill={INK}>
        <text x="698.700" y="1775.500">Appartement</text>
        <text x="1054.200" y="1775.500">Local industriel. commercial ou assimilé</text>
        <text x="1409.800" y="1775.500">Maison</text>
      </g>
      <g fontSize="12.950" textAnchor="middle" fill={INK}>
        <text x="1054.200" y="1802">Type de Bien</text>
        <text transform="translate(464 1584) rotate(-90)">Prix au m² (€)</text>
      </g>
    </ChartSvg>
  );
}

const SERIES = [
  ['Appartement', BLUE, [[0, 3890], [1, 1640], [2, 2610], [3, 1227], [5, 4000], [7, 1227], [11, 2517], [14, 1651], [15, 698], [16, 1384], [18, 762], [19, 593], [20, 703], [21, 988], [24, 924], [27, 1541], [34, 930]]],
  ['Local industriel. commercial ou assimilé', NAVY, [[0, 2262], [1, 116], [2, 1128], [3, 3279], [6, 349], [9, 2669], [15, 599], [17, 2233], [20, 837], [21, 471], [22, 970], [23, 3093], [24, 2198], [27, 1384], [29, 1558], [30, 622], [32, 855], [35, 500]]],
  ['Maison', PINK, [2000, 1413, 1581, 1279, 1424, 1605, 1610, 1645, 1599, 1849, 1558, 1273, 1750, 1442, 1733, 1541, 1203, 1657, 1360, 1552, 1860, 1965, 953, 1581, 1337, 1378, 1477, 1209, 1471, 1436, 1558, 1570, 1512, 1227, 1634, 1500].map((v, i) => [i, v])],
];

const monthX = (m) => 1751.8 + ((Date.UTC(2022, m, 1) - Date.UTC(2022, 0, 1)) / 86400000) * (732.2 / 1096);
const priceY = (v) => 1742.5 - (v / 4000) * 307;

function LineChart() {
  const ticks = ['Jan 2022', 'Jul 2022', 'Jan 2023', 'Jul 2023', 'Jan 2024', 'Jul 2024', 'Jan 2025'];
  return (
    <ChartSvg viewBox="1625 1360 1171.2 450">
      <text x="1629.500" y="1383" fontSize="15.050" fontWeight="700" fill="#fafafa">Évolution du Prix Moyen au m² par Type de Bien (3 Dernières Années)</text>
      {[0, 500, 1000, 1500, 2000, 2500, 3000, 3500, 4000].map((v) => (
        <g key={v}>
          <line x1="1708" x2="2507" y1={Math.floor(priceY(v)) + 0.5} y2={Math.floor(priceY(v)) + 0.5} stroke="#31333f" strokeWidth="1" />
          <text x="1699" y={priceY(v) + 4.5} fontSize="11.150" textAnchor="end" fill={INK}>{v}</text>
        </g>
      ))}
      {ticks.map((t, i) => (
        <text key={t} x={monthX(i * 6)} y="1775.500" fontSize="11.150" textAnchor="middle" fill={INK}>{t}</text>
      ))}
      {SERIES.map(([name, color, data]) => (
        <g key={name}>
          <polyline points={data.map(([m, v]) => `${monthX(m)},${priceY(v)}`).join(' ')} fill="none" stroke={color} strokeWidth="2" strokeLinejoin="round" />
          {data.map(([m, v]) => <circle key={m} cx={monthX(m)} cy={priceY(v)} r="3" fill={color} />)}
        </g>
      ))}
      <text x="2525" y="1430" fontSize="11.200" fill={INK}>Type de Bien</text>
      {SERIES.map(([name, color], i) => (
        <g key={name}>
          <line x1="2529" x2="2560" y1={1446 + i * 20} y2={1446 + i * 20} stroke={color} strokeWidth="2" />
          <circle cx="2544.500" cy={1446 + i * 20} r="3" fill={color} />
          <text x="2565.500" y={1450.5 + i * 20} fontSize="11.200" fill="#fafafa">{name}</text>
        </g>
      ))}
      <g fontSize="12.950" textAnchor="middle" fill={INK}>
        <text x="2107.800" y="1802">Mois/Année</text>
        <text transform="translate(1651 1584) rotate(-90)">Prix Moyen au m² (€)</text>
      </g>
    </ChartSvg>
  );
}

/* ---------- small parts ---------- */

const Cross = () => (
  <svg width="9" height="9" viewBox="0 0 9 9"><path d="M0.700,0.700L8.300,8.300M8.300,0.700L0.700,8.300" stroke="#fff" strokeWidth="1.700" /></svg>
);

const ClearIcon = () => (
  <svg width="15" height="15" viewBox="0 0 15 15">
    <circle cx="7.500" cy="7.500" r="7.300" fill="#808495" />
    <path d="M5,5L10,10M10,5L5,10" stroke="#0e1117" strokeWidth="1.600" />
  </svg>
);

const Chevron = () => (
  <svg width="16" height="10" viewBox="0 0 16 10"><path d="M3,2.200L8,7.200L13,2.200" fill="none" stroke="#fafafa" strokeWidth="2.200" /></svg>
);

const Stepper = ({ value, low }) => (
  <InputBox>
    <InputValue>{value}</InputValue>
    <Step $muted={low}><svg width="9" height="9" viewBox="0 0 9 9"><path d="M0.500,4.500H8.500" stroke="currentColor" strokeWidth="2" /></svg></Step>
    <Step><svg width="9" height="9" viewBox="0 0 9 9"><path d="M0.200,4.500H8.800M4.500,0.200V8.800" stroke="currentColor" strokeWidth="2" /></svg></Step>
  </InputBox>
);

const Field = ({ label, children }) => (
  <div>
    <Label>{label}</Label>
    {children}
  </div>
);

const Metric = ({ label, value }) => (
  <div>
    <MetricLabel>{label}</MetricLabel>
    <MetricValue>{value}</MetricValue>
  </div>
);

export default function App() {
  const views = ['Prix au m²', 'Tendances du marché', 'Données démographiques', 'Carte des biens'];
  return (
    <Shell>
      <GlobalStyle />
      <Sidebar>
        <Heading>Filtres</Heading>
        <Label $top={24.5}>Départements</Label>
        <SelectBox $height={42}>
          <Tags>
            <Tag $width={53}>31<Cross /></Tag>
            <Tag $width={53}>65<Cross /></Tag>
          </Tags>
          <SelectIcons><ClearIcon /><Chevron /></SelectIcons>
        </SelectBox>
        <Label $top={20}>Types de biens</Label>
        <SelectBox $height={122}>
          <Tags $stack>
            <Tag $width={129}>Appartement<Cross /></Tag>
            <Tag $width={171}><span>Local industriel. <Ellipsis>…</Ellipsis></span><Cross /></Tag>
            <Tag $width={86}>Maison<Cross /></Tag>
          </Tags>
          <SelectIcons><ClearIcon /><Chevron /></SelectIcons>
        </SelectBox>
        <Heading $top={46.5}>Navigation</Heading>
        <Label $top={25}>Sélectionnez une visualisation</Label>
        <RadioList>
          {views.map((v, i) => (
            <RadioRow key={v}><RadioDot $on={i === 3} />{v}</RadioRow>
          ))}
        </RadioList>
        <Subheading $top={36}>Statistiques (Données Filtrées)</Subheading>
        <InfoList>
          <InfoBox>Nombre de transactions: 159,687</InfoBox>
          <InfoBox>Prix moyen: 241,336.85 €</InfoBox>
          <InfoBox>Prix moyen au m²: 2,830.77 €/m²</InfoBox>
        </InfoList>
      </Sidebar>

      <Main>
        <FieldRow $columns="1168.500px 579px 579px">
          <Field label="Code Postal:"><InputBox><InputValue>31800</InputValue></InputBox></Field>
          <Field label="Rayon de recherche (km):"><Stepper value="10.00" /></Field>
          <SearchButton>Rechercher</SearchButton>
        </FieldRow>
        <Subheading $top={23} $color="#fafafa">Filtres optionnels</Subheading>
        <FieldRow $columns="1170px 1171.200px" $top={21}>
          <Field label="Prix minimum (€):"><Stepper value="0" low /></Field>
          <Field label="Surface minimum (m²):"><Stepper value="100" /></Field>
        </FieldRow>
        <FieldRow $columns="1170px 1171.200px" $top={19}>
          <Field label="Prix maximum (€) (0 pour ignorer):"><Stepper value="0" low /></Field>
          <Field label="Surface maximum (m²) (0 pour ignorer):"><Stepper value="150" /></Field>
        </FieldRow>
        <Paragraph $top={19}>Affichage de 1000 biens sur 1122 trouvés.</Paragraph>

        <MapFrame>
          <BaseMap />
          <ZoomControl>
            <ZoomButton><svg width="13" height="13" viewBox="0 0 13 13"><path d="M0,6.500H13M6.500,0V13" stroke="#000" strokeWidth="2" /></svg></ZoomButton>
            <ZoomButton><svg width="13" height="13" viewBox="0 0 13 13"><path d="M0,6.500H13" stroke="#000" strokeWidth="2" /></svg></ZoomButton>
          </ZoomControl>
          <Tooltip>1261 RUE DE LA VIEILLE SERRE, Appartement - 392,000 €</Tooltip>
          <Attribution><Flag /><b>Leaflet</b><span>|</span><span>© <b>OpenStreetMap</b> contributors © <b>CARTO</b></span></Attribution>
        </MapFrame>

        <Subheading $top={44}>Statistiques des biens affichés sur la carte</Subheading>
        <Paragraph $top={7}>Nombre de biens affichés sur la carte: 1000</Paragraph>
        <MetricRow>
          <Metric label="Prix moyen" value="184,032 €" />
          <Metric label="Surface moyenne" value="121.9 m²" />
          <Metric label="Prix moyen au m²" value="1,511.88 €/m²" />
        </MetricRow>
        <ChartRow>
          <div>
            <Subheading>Distribution des Prix au m² (12 Derniers Mois)</Subheading>
            <BoxChart />
          </div>
          <div>
            <Subheading>Évolution du Prix Moyen au m² (3 Dernières Années)</Subheading>
            <LineChart />
          </div>
        </ChartRow>
      </Main>

      <TopStripe />
      <Toolbar><Deploy>Deploy</Deploy><Dots><i /><i /><i /></Dots></Toolbar>
    </Shell>
  );
}
